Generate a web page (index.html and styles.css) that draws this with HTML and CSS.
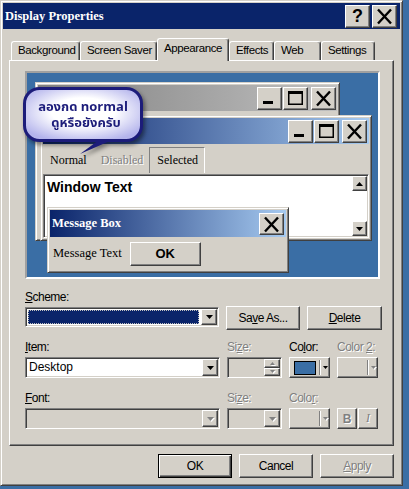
FILE: index.html
```html
<!DOCTYPE html>
<html lang="th">
<head>
<meta charset="UTF-8">
<title>Display Properties</title>
<link rel="stylesheet" href="styles.css">
</head>
<body>

<svg class="defs" width="0" height="0">
    <symbol id="ic-min" viewBox="0 0 25 23"><rect x="6" y="14" width="10" height="3"/></symbol>
    <symbol id="ic-max" viewBox="0 0 25 23"><path fill-rule="evenodd" d="M5 4h15v14H5z M6.5 7v9.5h12V7z"/></symbol>
    <symbol id="ic-close" viewBox="0 0 25 23"><path d="M6 4.5L19 18.5M19 4.5L6 18.5" stroke="currentColor" stroke-width="2.4" fill="none"/></symbol>
    <symbol id="ic-down" viewBox="0 0 7 4"><path d="M0 0h7L3.5 4z"/></symbol>
    <symbol id="ic-up" viewBox="0 0 7 4"><path d="M0 4h7L3.5 0z"/></symbol>
</svg>

<div class="window">

    <!-- title bar -->
    <div class="titlebar">
        <span class="title">Display Properties</span>
        <div class="caption-btns">
            <span class="cbtn help">?</span>
            <span class="cbtn"><svg class="ico" width="25" height="23"><use href="#ic-close"/></svg></span>
        </div>
    </div>

    <!-- tabs -->
    <div class="tabs">
        <span class="tab t-bg">Background</span>
        <span class="tab t-ss">Screen Saver</span>
        <span class="tab t-ap sel">Appearance</span>
        <span class="tab t-fx">Effects</span>
        <span class="tab t-web">Web</span>
        <span class="tab t-set">Settings</span>
    </div>

    <div class="panel">

        <!-- preview desktop -->
        <div class="preview">
            <div class="frame inactive">
                <div class="cap cap-inactive">
                    <span class="cb"><svg class="ico" width="25" height="23"><use href="#ic-min"/></svg></span>
                    <span class="cb"><svg class="ico" width="25" height="23"><use href="#ic-max"/></svg></span>
                    <span class="cb gap"><svg class="ico" width="25" height="23"><use href="#ic-close"/></svg></span>
                </div>
            </div>

            <div class="frame active-win">
                <div class="cap cap-active">
                    <span class="cb"><svg class="ico" width="25" height="23"><use href="#ic-min"/></svg></span>
                    <span class="cb"><svg class="ico" width="25" height="23"><use href="#ic-max"/></svg></span>
                    <span class="cb gap"><svg class="ico" width="25" height="23"><use href="#ic-close"/></svg></span>
                </div>
                <div class="menubar">
                    <span class="mi">Normal</span>
                    <span class="mi dis">Disabled</span>
                    <span class="mi selected">Selected</span>
                </div>
                <div class="textarea sunken">
                    <div class="wtext">Window Text</div>
                    <div class="vscroll">
                        <span class="sbtn"><svg class="ico" width="7" height="4"><use href="#ic-up"/></svg></span>
                        <span class="sbtn"><svg class="ico" width="7" height="4"><use href="#ic-down"/></svg></span>
                    </div>
                </div>
            </div>

            <div class="frame msgbox">
                <div class="cap cap-active msgcap">
                    <span class="msgtitle">Message Box</span>
                    <span class="cb cb-msg"><svg class="ico" width="25" height="23"><use href="#ic-close"/></svg></span>
                </div>
                <div class="msgbody">
                    <span class="msgtext">Message Text</span>
                    <span class="okbtn">OK</span>
                </div>
            </div>

            <!-- callout -->
            <div class="callout">
                <svg width="130" height="72" viewBox="0 0 130 72">
                    <defs>
                        <radialGradient id="bub" cx="0.5" cy="0.45" r="0.6">
                            <stop offset="0.45" stop-color="#ffffff"/>
                            <stop offset="1" stop-color="#b4b4ec"/>
                        </radialGradient>
                    </defs>
                    <polygon points="80,50 96,50 57,67" fill="#1c1c7a"/>
                    <rect x="1.5" y="1.5" width="117" height="52" rx="15" fill="url(#bub)" stroke="#1c1c7a" stroke-width="3"/>
                </svg>
                <div class="callout-text">
                    <span class="cl1">ลองกด normal</span>
                    <span class="cl2">ดูหรือยังครับ</span>
                </div>
            </div>
        </div>

        <!-- scheme -->
        <div class="scheme">
            <div class="label"><u>S</u>cheme:</div>
            <div class="scheme-row">
                <div class="combo sunken w-main">
                    <div class="combo-val focus"></div>
                    <span class="arrow"><svg class="ico" width="7" height="4"><use href="#ic-down"/></svg></span>
                </div>
                <span class="btn b-save">Sa<u>v</u>e As...</span>
                <span class="btn b-del"><u>D</u>elete</span>
            </div>
        </div>

        <!-- item -->
        <div class="fgrid item-grid">
            <div class="label"><u>I</u>tem:</div>
            <div class="label dis">Si<u>z</u>e:</div>
            <div class="label">Co<u>l</u>or:</div>
            <div class="label dis">Color <u>2</u>:</div>

            <div class="combo sunken">
                <div class="combo-val">Desktop</div>
                <span class="arrow"><svg class="ico" width="7" height="4"><use href="#ic-down"/></svg></span>
            </div>
            <div class="spin sunken gray">
                <div class="combo-val"></div>
                <div class="spinbtns">
                    <span class="sp dis-ico"><svg class="ico" width="5" height="3"><use href="#ic-up"/></svg></span>
                    <span class="sp dis-ico"><svg class="ico" width="5" height="3"><use href="#ic-down"/></svg></span>
                </div>
            </div>
            <div class="colorbtn">
                <span class="swatch"></span>
                <span class="divider"></span>
                <svg class="ico carrow" width="5" height="3"><use href="#ic-down"/></svg>
            </div>
            <div class="colorbtn">
                <span class="swatch empty"></span>
                <span class="divider"></span>
                <svg class="ico carrow dis-ico" width="5" height="3"><use href="#ic-down"/></svg>
            </div>
        </div>

        <!-- font -->
        <div class="fgrid font-grid">
            <div class="label"><u>F</u>ont:</div>
            <div class="label dis">Si<u>z</u>e:</div>
            <div class="label dis">Colo<u>r</u>:</div>
            <div></div>

            <div class="combo sunken gray">
                <div class="combo-val"></div>
                <span class="arrow dis-ico"><svg class="ico" width="7" height="4"><use href="#ic-down"/></svg></span>
            </div>
            <div class="combo sunken gray">
                <div class="combo-val"></div>
                <span class="arrow dis-ico"><svg class="ico" width="7" height="4"><use href="#ic-down"/></svg></span>
            </div>
            <div class="colorbtn">
                <span class="swatch empty"></span>
                <span class="divider"></span>
                <svg class="ico carrow dis-ico" width="5" height="3"><use href="#ic-down"/></svg>
            </div>
            <div class="bi">
                <span class="bibtn bold dis">B</span>
                <span class="bibtn ital dis">I</span>
            </div>
        </div>
    </div>

    <!-- dialog buttons -->
    <div class="actions">
        <span class="btn dlg def">OK</span>
        <span class="btn dlg">Cancel</span>
        <span class="btn dlg dis"><u>A</u>pply</span>
    </div>
</div>

</body>
</html>
```

FILE: styles.css
```css
body {
    margin: 0;
    background: #3a6ea5;
    font-family: "Liberation Sans", Arial, sans-serif;
    font-size: 12px;
    color: #000;
}

.defs {
    position: absolute;
}

.ico {
    display: block;
    fill: currentColor;
    color: #000;
}

.window {
    width: 403px;
    height: 486px;
    box-sizing: border-box;
    background: #d4d0c8;
    border: 1px solid;
    border-color: #d4d0c8 #404040 #404040 #d4d0c8;
    box-shadow: inset 1px 1px #fff, inset -1px -1px #808080;
    padding: 2px;
}

/* title bar */
.titlebar {
    height: 26px;
    background: #0a246a;
    display: flex;
    align-items: center;
    justify-content: space-between;
    padding: 0 3px 0 2px;
}

.title {
    color: #fff;
    font-family: "Liberation Serif", "Times New Roman", serif;
    font-weight: bold;
    font-size: 12.5px;
}

.caption-btns {
    display: flex;
    gap: 2px;
}

.cbtn, .cb, .sbtn, .arrow, .sp, .btn, .okbtn, .bibtn, .colorbtn {
    box-sizing: border-box;
    background: #d4d0c8;
    border: 1px solid;
    border-color: #fff #404040 #404040 #fff;
    box-shadow: inset -1px -1px #808080;
}

.cbtn {
    width: 25px;
    height: 23px;
    display: flex;
    align-items: center;
    justify-content: center;
}

.cbtn .ico {
    margin: -1px;
}

.help {
    font-weight: bold;
    font-size: 18px;
    line-height: 20px;
}

/* tabs */
.tabs {
    display: flex;
    align-items: flex-end;
    height: 22px;
    margin-top: 9px;
    padding-left: 8px;
}

.tab {
    height: 19px;
    box-sizing: border-box;
    border: 1px solid;
    border-color: #fff #404040 transparent #fff;
    border-bottom: none;
    box-shadow: inset -1px 0 #808080;
    border-radius: 3px 3px 0 0;
    padding-left: 6px;
    line-height: 17px;
    font-size: 11.5px;
    letter-spacing: -0.4px;
    white-space: nowrap;
}

.tab.sel {
    height: 23px;
    margin-bottom: -1px;
    position: relative;
    z-index: 1;
    background: #d4d0c8;
    line-height: 19px;
}

.t-bg { width: 69px; }
.t-ss { width: 77px; }
.t-ap { width: 72px; }
.t-fx { width: 45px; }
.t-web { width: 47px; }
.t-set { width: 54px; }

.panel {
    margin: 0 6px;
    height: 386px;
    box-sizing: border-box;
    border: 1px solid;
    border-color: #fff #404040 #404040 #fff;
    box-shadow: inset -1px -1px #808080;
    padding: 10px 0 0 15px;
}

/* preview */
.preview {
    position: relative;
    width: 355px;
    height: 208px;
    box-sizing: border-box;
    border: 2px solid;
    border-color: #a0a0a0 #fff #fff #a0a0a0;
    background: #3a6ea5;
}

.frame {
    position: absolute;
    box-sizing: border-box;
    background: #d4d0c8;
    border: 1px solid;
    border-color: #d4d0c8 #404040 #404040 #d4d0c8;
    box-shadow: inset 1px 1px #fff, inset -1px -1px #808080;
    padding: 2px;
}

.inactive {
    left: 8px;
    top: 9px;
    width: 305px;
    height: 159px;
}

.active-win {
    left: 13px;
    top: 42px;
    width: 332px;
    height: 126px;
}

.msgbox {
    left: 20px;
    top: 134px;
    width: 242px;
    height: 66px;
}

.cap {
    height: 26px;
    display: flex;
    align-items: center;
    justify-content: flex-end;
}

.cap-inactive {
    background: linear-gradient(90deg, #808080, #c0c0c0);
    padding-right: 1px;
}

.cap-active {
    background: linear-gradient(90deg, #0a246a, #a6caf0);
    padding-right: 2px;
}

.cb {
    width: 25px;
    height: 23px;
}

.cb .ico {
    margin: -1px;
}

.cb + .cb {
    margin-left: 1px;
}

.cb.gap {
    margin-left: 3px;
}

.menubar {
    height: 30px;
    display: flex;
    align-items: flex-start;
    font-family: "Liberation Serif", "Times New Roman", serif;
    font-size: 12px;
}

.mi {
    margin-top: 3px;
    padding: 0 7px;
    height: 26px;
    line-height: 26px;
    box-sizing: border-box;
}

.mi.selected {
    border-left: 1px solid #808080;
    border-top: 1px solid #808080;
    border-right: 1px solid #fff;
    line-height: 25px;
    padding: 0 6px 0 7px;
    margin-left: -1px;
}

.dis {
    color: #808080;
    text-shadow: 1px 1px #fff;
}

.dis-ico .ico, .ico.dis-ico {
    color: #808080;
    filter: drop-shadow(1px 1px 0 #fff);
}

.sunken {
    box-sizing: border-box;
    border: 1px solid;
    border-color: #808080 #fff #fff #808080;
    box-shadow: inset 1px 1px #404040, inset -1px -1px #d4d0c8;
    padding: 1px;
}

.textarea {
    height: 64px;
    background: #fff;
    display: flex;
}

.wtext {
    flex: 1;
    padding: 1px 0 0 2px;
    font-weight: bold;
    font-size: 14px;
    line-height: 20px;
}

.vscroll {
    width: 15px;
    display: flex;
    flex-direction: column;
    justify-content: space-between;
}

.sbtn {
    width: 15px;
    height: 15px;
    display: flex;
    align-items: center;
    justify-content: center;
}

.msgcap {
    height: 27px;
    justify-content: space-between;
    padding-left: 2px;
}

.msgtitle {
    color: #fff;
    font-family: "Liberation Serif", "Times New Roman", serif;
    font-weight: bold;
    font-size: 12.5px;
}

.cb-msg {
    height: 22px;
}

.msgbody {
    height: 33px;
    display: flex;
    align-items: center;
    padding-left: 3px;
}

.msgtext {
    font-family: "Liberation Serif", "Times New Roman", serif;
    font-size: 12.5px;
}

.okbtn {
    width: 71px;
    height: 24px;
    margin-left: 8px;
    text-align: center;
    line-height: 22px;
    font-weight: bold;
    font-size: 13px;
}

/* callout bubble over the preview */
.callout {
    position: absolute;
    left: -4px;
    top: 14px;
    width: 130px;
    height: 72px;
    z-index: 5;
    filter: drop-shadow(2px 3px 2px rgba(0, 0, 0, 0.45));
}

.callout svg {
    display: block;
}

.callout-text {
    position: absolute;
    left: 0;
    top: 0;
    width: 120px;
    height: 55px;
    display: flex;
    flex-direction: column;
    align-items: center;
    justify-content: center;
    gap: 2px;
    font-family: "Noto Sans Thai", "Noto Sans Thai UI", "Loma", "Tahoma", "DejaVu Sans", sans-serif;
    font-weight: bold;
    font-size: 13px;
    color: #1c1c7a;
}

.callout-text span {
    height: 14px;
    line-height: 14px;
}

.cl2 {
    padding-left: 6px;
}

/* form */
.label {
    height: 14px;
    line-height: 14px;
    letter-spacing: -0.5px;
    white-space: nowrap;
}

.scheme {
    margin-top: 11px;
}

.scheme .label {
    margin-bottom: 2px;
}

.scheme-row {
    display: flex;
    align-items: flex-start;
    gap: 7px;
}

.w-main {
    width: 194px;
    margin-top: 1px;
}

.combo {
    height: 20px;
    background: #fff;
    display: flex;
}

.fgrid .combo {
    height: 21px;
}

.combo.gray, .spin.gray {
    background: #d4d0c8;
}

.combo-val {
    flex: 1;
    padding-left: 2px;
    line-height: 17px;
    font-size: 12px;
}

.combo-val.focus {
    background: #0a246a;
    outline: 1px dotted #c0c0c0;
    outline-offset: -1px;
    margin: 1px 2px 1px 1px;
}

.arrow {
    width: 16px;
    display: flex;
    align-items: center;
    justify-content: center;
}

.btn {
    height: 24px;
    display: flex;
    align-items: center;
    justify-content: center;
    letter-spacing: -0.5px;
    white-space: nowrap;
}

.b-save {
    width: 74px;
}

.b-del {
    width: 75px;
}

.fgrid {
    display: grid;
    grid-template-columns: 195px 55px 41px 41px;
    grid-template-rows: 14px 21px;
    column-gap: 7px;
    row-gap: 3px;
}

.item-grid {
    margin-top: 10px;
}

.font-grid {
    margin-top: 13px;
}

.spin {
    display: flex;
}

.spinbtns {
    width: 16px;
    display: flex;
    flex-direction: column;
}

.sp {
    flex: 1;
    display: flex;
    align-items: center;
    justify-content: center;
}

.colorbtn {
    height: 21px;
    display: flex;
    align-items: center;
    padding-left: 4px;
}

.swatch {
    width: 22px;
    height: 14px;
    box-sizing: border-box;
    border: 1px solid #000;
    background: #3a6ea5;
}

.swatch.empty {
    border: none;
    background: transparent;
}

.divider {
    width: 0;
    height: 15px;
    margin-left: 3px;
    border-left: 1px solid #808080;
    border-right: 1px solid #fff;
}

.carrow {
    margin-left: 2px;
}

.bi {
    display: flex;
    gap: 1px;
}

.bibtn {
    width: 20px;
    height: 21px;
    display: flex;
    align-items: center;
    justify-content: center;
    font-size: 12px;
}

.bibtn.bold {
    font-weight: bold;
}

.bibtn.ital {
    font-family: "Liberation Serif", serif;
    font-style: italic;
}

/* dialog buttons */
.actions {
    display: flex;
    justify-content: flex-end;
    gap: 7px;
    margin-top: 8px;
    padding-right: 6px;
}

.btn.dlg {
    width: 74px;
    height: 24px;
}

.btn.def {
    border-color: #000;
    box-shadow: inset 1px 1px #fff, inset -1px -1px #404040, inset -2px -2px #808080;
}
```
